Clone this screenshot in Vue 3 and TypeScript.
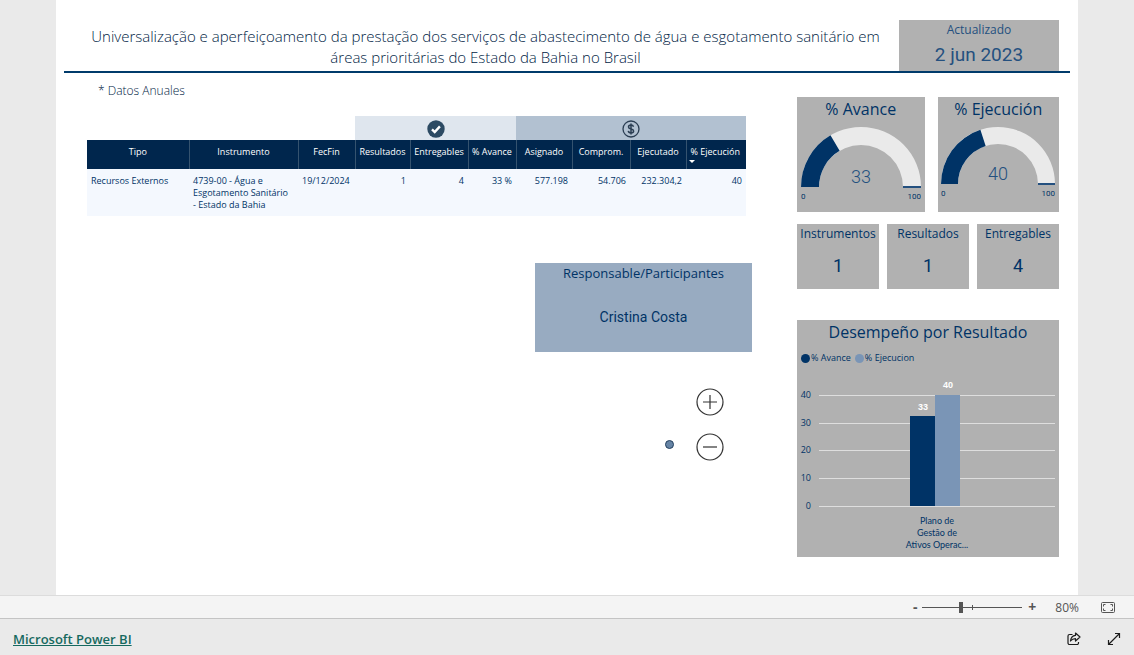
<script setup lang="ts">
import { ref } from 'vue'

interface Gauge { title: string; value: number; radius: number; inner: number }

const zoom = ref(38)

const gauges: Gauge[] = [
  { title: '% Avance', value: 33, radius: 60, inner: 42 },
  { title: '% Ejecución', value: 40, radius: 57, inner: 40 },
]

const tiles = [
  { label: 'Instrumentos', value: 1 },
  { label: 'Resultados', value: 1 },
  { label: 'Entregables', value: 4 },
]

const columns = ['Tipo', 'Instrumento', 'FecFin', 'Resultados', 'Entregables', '% Avance', 'Asignado', 'Comprom.', 'Ejecutado', '% Ejecución']
const row = ['Recursos Externos', '4739-00 - Água e Esgotamento Sanitário - Estado da Bahia', '19/12/2024', '1', '4', '33 %', '577.198', '54.706', '232.304,2', '40']

const ticks = [40, 30, 20, 10, 0]
const yOf = (v: number) => Math.round(126 - v * 2.78)

function arc(g: Gauge, share: number): string {
  const a = Math.PI * (1 - share)
  const cx = g.radius
  const cy = g.radius
  const p = (r: number) => `${(cx + r * Math.cos(a)).toFixed(2)} ${(cy - r * Math.sin(a)).toFixed(2)}`
  return `M0 ${cy}A${g.radius} ${g.radius} 0 0 1 ${p(g.radius)}L${p(g.inner)}A${g.inner} ${g.inner} 0 0 0 ${cx - g.inner} ${cy}Z`
}
</script>

<template>
  <div class="app">
    <main class="canvas">
      <div class="page">
        <header class="head">
          <h1>Universalização e aperfeiçoamento da prestação dos serviços de abastecimento de água e esgotamento sanitário em áreas prioritárias do Estado da Bahia no Brasil</h1>
          <div class="updated">
            <span class="updated-label">Actualizado</span>
            <span class="updated-date">2 jun 2023</span>
          </div>
        </header>

        <div class="body">
          <section class="left">
            <p class="note">* Datos Anuales</p>
            <table>
              <colgroup>
                <col v-for="(c, i) in columns" :key="c" :class="'c' + i" />
              </colgroup>
              <thead>
                <tr class="bands">
                  <td colspan="3"></td>
                  <td colspan="3" class="band-light">
                    <svg width="18" height="18" viewBox="0 0 18 18" aria-hidden="true">
                      <circle cx="9" cy="9" r="8.7" fill="#2c4a63" />
                      <path d="M5 9.4l2.7 2.6 5.2-5.6" fill="none" stroke="#fff" stroke-width="2.4" />
                    </svg>
                  </td>
                  <td colspan="4" class="band-dark">
                    <svg width="18" height="18" viewBox="0 0 18 18" aria-hidden="true">
                      <g fill="none" stroke="#2a3d52">
                        <circle cx="9" cy="9" r="8" stroke-width="1.3" />
                        <path d="M11.5 6.8C11.2 5.6 10.2 5.1 9 5.1c-1.400 0-2.500.7-2.500 1.900 0 2.700 5.100 1.200 5.100 3.900 0 1.300-1.200 2-2.600 2-1.500 0-2.500-.7-2.700-2M9 3.500v11" stroke-width="1.500" />
                      </g>
                    </svg>
                  </td>
                </tr>
                <tr class="titles">
                  <th v-for="(c, i) in columns" :key="c" scope="col">
                    {{ c }}<span v-if="i === 9" class="sort"></span>
                  </th>
                </tr>
              </thead>
              <tbody>
                <tr>
                  <td v-for="(v, i) in row" :key="i" :class="{ num: i > 2, wrap: i === 1 }">{{ v }}</td>
                </tr>
              </tbody>
            </table>

            <div class="card people">
              <h2>Responsable/Participantes</h2>
              <p>Cristina Costa</p>
            </div>

            <div class="pad">
              <span class="dot"></span>
              <div class="pad-buttons">
                <button type="button" aria-label="Expandir">
                  <svg width="28" height="28" viewBox="0 0 28 28"><circle cx="14" cy="14" r="13" /><path d="M7 14h14M14 7v14" /></svg>
                </button>
                <button type="button" aria-label="Contraer">
                  <svg width="28" height="28" viewBox="0 0 28 28"><circle cx="14" cy="14" r="13" /><path d="M7 14h14" /></svg>
                </button>
              </div>
            </div>
          </section>

          <aside class="right">
            <div class="gauges">
              <div v-for="g in gauges" :key="g.title" class="gauge">
                <h2>{{ g.title }}</h2>
                <svg :width="g.radius * 2" :height="g.radius + 16" :viewBox="`0 0 ${g.radius * 2} ${g.radius + 16}`">
                  <path :d="arc(g, 1)" fill="#eaeaea" />
                  <path :d="arc(g, g.value / 100)" fill="#003366" />
                  <rect :x="g.radius + g.inner" :y="g.radius - 1" :width="g.radius - g.inner" height="2" fill="#24507f" />
                  <text :x="g.radius" :y="g.radius - 4" class="gauge-value">{{ g.value }}</text>
                  <text x="0" :y="g.radius + 12" class="gauge-end">0</text>
                  <text :x="g.radius * 2" :y="g.radius + 12" class="gauge-end end">100</text>
                </svg>
              </div>
            </div>

            <div class="tiles">
              <div v-for="t in tiles" :key="t.label" class="tile">
                <h3>{{ t.label }}</h3>
                <p>{{ t.value }}</p>
              </div>
            </div>

            <div class="chart">
              <h2>Desempeño por Resultado</h2>
              <div class="legend">
                <span><i class="k1"></i>% Avance</span>
                <span><i class="k2"></i>% Ejecucion</span>
              </div>
              <svg class="plot" viewBox="0 0 262 180">
                <g v-for="t in ticks" :key="t">
                  <line x1="22" x2="258" :y1="yOf(t) + 0.5" :y2="yOf(t) + 0.5" stroke="#dedede" />
                  <text x="14" :y="yOf(t) + 3" class="axis">{{ t }}</text>
                </g>
                <rect x="113" :y="yOf(32.3)" width="25" :height="126 - yOf(32.3)" fill="#003366" />
                <rect x="138" :y="yOf(40)" width="25" :height="126 - yOf(40)" fill="#7a95b6" />
                <text x="126" :y="yOf(32.3) - 6" class="val">33</text>
                <text x="151" :y="yOf(40) - 7" class="val">40</text>
                <text x="140" y="144" class="cat">Plano de</text>
                <text x="140" y="156" class="cat">Gestão de</text>
                <text x="140" y="168" class="cat">Ativos Operac...</text>
              </svg>
            </div>
          </aside>
        </div>
      </div>
    </main>

    <div class="zoombar">
      <button type="button" class="step" aria-label="Alejar">-</button>
      <input v-model.number="zoom" type="range" min="0" max="100" aria-label="Zoom" />
      <button type="button" class="step" aria-label="Acercar">+</button>
      <span class="percent">80%</span>
      <button type="button" class="fit" aria-label="Ajustar a la página">
        <svg width="14" height="11" viewBox="0 0 14 11" fill="none" stroke="#555">
          <rect x=".5" y=".5" width="13" height="10" rx="1" />
          <path d="M2.500 4.500v-2h2M9.500 2.500h2v2M11.500 6.500v2h-2M4.500 8.500h-2v-2" />
        </svg>
      </button>
    </div>

    <footer class="foot">
      <a href="#">Microsoft Power BI</a>
      <div class="actions">
        <button type="button" aria-label="Compartir">
          <svg width="14" height="14" viewBox="0 0 14 14" fill="none" stroke="#1c1c1c" stroke-width="1.200" stroke-linejoin="round">
            <path d="M5.500 2.500h-3a1.500 1.500 0 0 0-1.500 1.500v7a1.500 1.500 0 0 0 1.500 1.500h7.500a1.500 1.500 0 0 0 1.500-1.500v-1" />
            <path d="M8.500 1l4.500 4-4.500 4v-2.300c-2.200 0-3.700.6-5 2.300.3-3 2-5.300 5-5.600z" />
          </svg>
        </button>
        <button type="button" aria-label="Pantalla completa">
          <svg width="14" height="14" viewBox="0 0 14 14" fill="none" stroke="#1c1c1c" stroke-width="1.200">
            <path d="M1.500 12.500l11-11M8 1.500h4.500V6M1.500 8v4.500H6" />
          </svg>
        </button>
      </div>
    </footer>
  </div>
</template>

<style>
body { margin: 0; }
</style>

<style scoped>
* { box-sizing: border-box; }
h1, h2, h3, p { margin: 0; font-weight: 400; }
button { padding: 0; border: 0; background: none; cursor: pointer; font: inherit; color: inherit; }
svg { display: block; }

.app {
  min-height: 100vh;
  display: flex;
  flex-direction: column;
  background: #eaeaea;
  color: #003366;
  font-family: "Open Sans", "Noto Sans", sans-serif;
}
.canvas { flex: 1; padding: 0 56px; display: flex; }
.page { flex: 1; background: #fff; }

.head {
  display: flex;
  margin: 0 8px;
  padding: 20px 11px 0 16px;
  border-bottom: 2px solid #003b6b;
}
h1 {
  flex: 1;
  padding: 6px 8px 0 0;
  font-size: 15px;
  font-weight: 300;
  line-height: 21px;
  text-align: center;
  color: #001c44;
}
.updated {
  width: 160px;
  height: 51px;
  background: #b1b1b1;
  display: flex;
  flex-direction: column;
  align-items: center;
  color: #24507f;
}
.updated-label { font-size: 12px; line-height: 20px; }
.updated-date { font-family: Roboto, sans-serif; font-size: 19px; line-height: 29px; }

.body { display: flex; padding: 0 19px 0 31px; }
.left { flex: 1; }
.note { padding: 9px 11px 0; font-size: 12px; font-weight: 300; line-height: 18px; color: #001c44; }

table {
  width: calc(100% - 51px);
  margin-top: 16px;
  table-layout: fixed;
  border-collapse: collapse;
  font-size: 9px;
}
.c0 { width: 102px; } .c1 { width: 109px; } .c2 { width: 57px; }
.c3 { width: 55px; } .c4 { width: 58px; } .c5 { width: 48px; }
.c6 { width: 56px; } .c7 { width: 58px; } .c8 { width: 56px; } .c9 { width: 60px; }
.bands td { height: 24px; padding: 0; }
.bands svg { margin: 2px auto 0; }
.band-light { background: #dfe6ee; }
.band-dark { background: #b2c1d1; }
.titles th {
  position: relative;
  height: 29px;
  padding: 6px 0 0;
  vertical-align: top;
  background: #00264d;
  color: #fff;
  font-weight: 500;
  line-height: 12px;
  white-space: nowrap;
}
.titles th + th { border-left: 1px solid #35536f; }
.titles th:last-child { padding-right: 2px; }
.sort {
  position: absolute;
  left: 2px;
  bottom: 6px;
  border: 3px solid transparent;
  border-top-color: #fff;
  border-bottom: 0;
}
tbody td {
  height: 47px;
  padding: 6px 4px 4px;
  vertical-align: top;
  background: #f4f8fe;
  line-height: 12px;
}
tbody td.num { text-align: right; }
tbody td.wrap { padding-right: 10px; }

.people {
  width: 217px;
  height: 89px;
  margin: 47px 45px 0 auto;
  background: #98abc1;
  text-align: center;
}
.people h2 { font-size: 13px; line-height: 21px; }
.people p { padding-top: 22px; font-family: Roboto, sans-serif; font-size: 14px; line-height: 22px; }

.pad { display: flex; justify-content: flex-end; align-items: flex-end; gap: 22px; margin: 36px 73px 0 0; }
.dot { width: 9px; height: 9px; margin-bottom: 12px; border: 1px solid #24405f; border-radius: 50%; background: #6684a5; }
.pad-buttons { display: grid; gap: 17px; }
.pad-buttons svg { fill: none; stroke: #333; stroke-width: 1.2; }

.right { width: 262px; padding-top: 24px; }
.gauges { display: flex; gap: 13px; }
.gauge { flex: 1 1 auto; height: 115px; background: #b1b1b1; display: flex; flex-direction: column; align-items: center; }
.gauge h2 { font-size: 16px; line-height: 24px; margin-bottom: 6px; }
.gauge-value { font-family: Roboto, sans-serif; font-weight: 300; font-size: 18px; text-anchor: middle; fill: #24507f; }
.gauge-end { font-family: Roboto, sans-serif; font-size: 8px; fill: #003366; }
.end { text-anchor: end; }

.tiles { display: flex; gap: 8px; margin-top: 12px; }
.tile { flex: 1; height: 65px; background: #b1b1b1; text-align: center; }
.tile h3 { font-size: 12px; line-height: 20px; }
.tile p { padding-top: 10px; font-family: Roboto, sans-serif; font-size: 18px; line-height: 24px; }

.chart { margin-top: 31px; background: #b1b1b1; height: 237px; }
.chart h2 { font-size: 16px; line-height: 24px; text-align: center; }
.legend { display: flex; gap: 4px; padding: 8px 4px 0; font-size: 9px; line-height: 12px; }
.legend span { display: flex; align-items: center; gap: 1px; }
.legend i { width: 9px; height: 9px; border-radius: 50%; }
.k1 { background: #003366; }
.k2 { background: #7a95b6; }
.plot { width: 100%; margin-top: 16px; font-size: 9px; fill: #003366; }
.axis { text-anchor: end; }
.cat { font-family: Lato, sans-serif; text-anchor: middle; }
.val { font: 700 9px "Liberation Sans", Arial, sans-serif; fill: #fff; text-anchor: middle; }

.zoombar {
  height: 24px;
  display: flex;
  align-items: center;
  justify-content: flex-end;
  padding-right: 19px;
  background: #f4f4f4;
  border-top: 1px solid #dcdcdc;
  border-bottom: 1px solid #c4c4c4;
  color: #555;
  font-size: 12px;
}
.step { width: 14px; font-size: 14px; line-height: 20px; font-weight: 700; }
.zoombar input {
  width: 100px;
  height: 14px;
  margin: 0 3px 0 0;
  appearance: none;
  background:
    linear-gradient(#555, #555) 50% 50% / 1px 5px no-repeat,
    linear-gradient(#555, #555) 0 50% / 100% 1px no-repeat;
}
.zoombar input::-webkit-slider-thumb { appearance: none; width: 4px; height: 11px; background: #555; }
.percent { margin: 0 22px 0 16px; }

.foot {
  height: 36px;
  display: flex;
  align-items: center;
  justify-content: space-between;
  padding: 3px 13px 0;
}
.foot a { color: #16695f; font-size: 13px; font-weight: 600; }
.actions { display: flex; gap: 26px; }
</style>
